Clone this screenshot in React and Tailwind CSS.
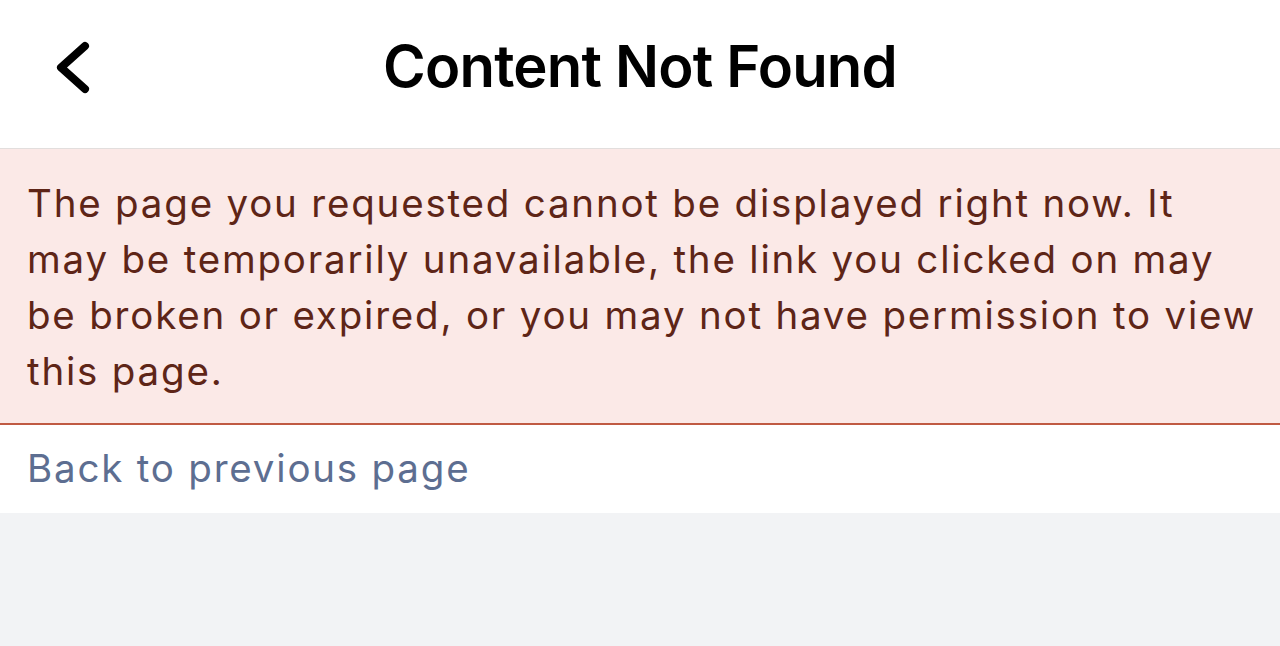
import React from "react";

const ChevronLeft = () => (
  <svg width="44" height="62" viewBox="0 0 44 62" fill="none">
    <path
      d="M35 10 L11 31.5 L35 53"
      stroke="#000"
      strokeWidth="8"
      strokeLinecap="round"
      strokeLinejoin="round"
    />
  </svg>
);

const lines = [
  "The page you requested cannot be displayed right now. It",
  "may be temporarily unavailable, the link you clicked on may",
  "be broken or expired, or you may not have permission to view",
  "this page.",
];

const App = () => {
  return (
    <div
      className="min-h-[646px] bg-[#f2f3f5]"
      style={{ fontFamily: "Inter, 'Noto Sans', sans-serif" }}
    >
      <header className="relative flex h-[149px] items-center justify-center border-b border-[#e2dedd] bg-white">
        <button className="absolute left-[50px] top-[36px]">
          <ChevronLeft />
        </button>
        <h1 className="-mt-[16px] text-[58px] font-semibold tracking-[-0.8px] text-black">
          Content Not Found
        </h1>
      </header>

      <div className="overflow-hidden border-b-2 border-[#c05a43] bg-[#fbe9e7] pb-[24px] pl-[27px] pr-[10px] pt-[26px]">
        <p className="whitespace-nowrap text-[38.5px] leading-[56px] tracking-[1.8px] text-[#5e2517]">
          {lines.map((line, i) => (
            <span key={i} className="block">
              {line}
            </span>
          ))}
        </p>
      </div>

      <div className="flex h-[88px] items-center bg-white px-[27px]">
        <a className="text-[38.5px] tracking-[1.8px] text-[#5d6e91]">
          Back to previous page
        </a>
      </div>
    </div>
  );
};

export default App;
